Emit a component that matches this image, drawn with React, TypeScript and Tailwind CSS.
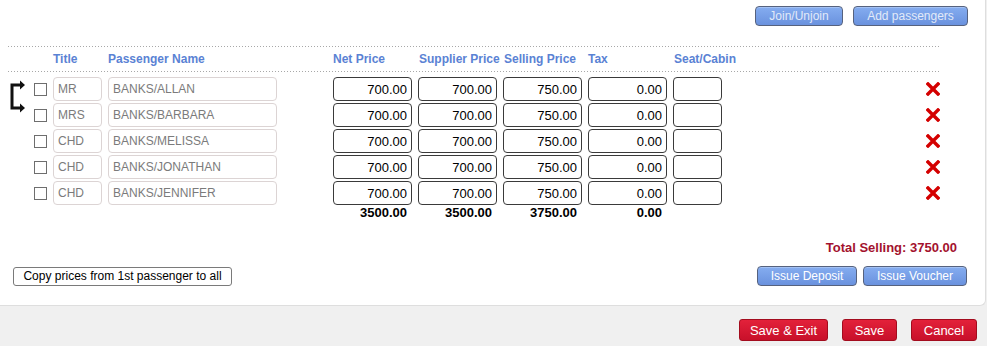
import React from "react";

type Passenger = { title: string; name: string; net: string; supplier: string; selling: string; tax: string };

const passengers: Passenger[] = [
  { title: "MR", name: "BANKS/ALLAN", net: "700.00", supplier: "700.00", selling: "750.00", tax: "0.00" },
  { title: "MRS", name: "BANKS/BARBARA", net: "700.00", supplier: "700.00", selling: "750.00", tax: "0.00" },
  { title: "CHD", name: "BANKS/MELISSA", net: "700.00", supplier: "700.00", selling: "750.00", tax: "0.00" },
  { title: "CHD", name: "BANKS/JONATHAN", net: "700.00", supplier: "700.00", selling: "750.00", tax: "0.00" },
  { title: "CHD", name: "BANKS/JENNIFER", net: "700.00", supplier: "700.00", selling: "750.00", tax: "0.00" },
];

const blueBtn =
  "h-[20px] rounded-[4px] border border-[#56627e] bg-[linear-gradient(#85adf0,#6a92de)] text-[12px] leading-none shadow-[inset_0_1px_0_rgba(255,255,255,0.25)]";
const redBtn =
  "h-[22px] rounded-[3px] border border-[#a30c1e] bg-[linear-gradient(#e3213a,#c8102a)] text-[13px] text-white leading-none";
const priceInput =
  "h-[24px] rounded-[4px] border border-[#3a3a3a] bg-white pr-[4px] text-right text-[13px] text-black outline-none";
const grayInput =
  "h-[24px] rounded-[4px] border border-[#dcd4d4] bg-white text-[12px] text-[#7b7b7b] outline-none";

function Dots() {
  return <div className="ml-[8px] h-px w-[932px] bg-[linear-gradient(to_right,#a8a8a8_1px,transparent_1px)] bg-[length:3px_1px]" />;
}

function RemoveIcon() {
  return (
    <svg width="14" height="14" viewBox="0 0 14 14" className="ml-[204px]">
      <path d="M2 2 L12 12 M12 2 L2 12" stroke="#d40000" strokeWidth="3.4" strokeLinecap="square" />
    </svg>
  );
}

function JoinArrow() {
  return (
    <svg width="18" height="36" viewBox="0 0 18 36" className="absolute left-[9px] top-[1px]">
      <path d="M3 7 V30 M3 7 H11 M3 30 H11" stroke="#111" strokeWidth="3" fill="none" strokeLinecap="square" />
      <path d="M11 2.5 L16 7 L11 11.5 Z" fill="#111" />
      <path d="M11 25.5 L16 30 L11 34.5 Z" fill="#111" />
    </svg>
  );
}

export default function App() {
  return (
    <div className="h-[346px] w-[987px] overflow-hidden bg-[#f0f0f0] font-['Liberation_Sans',Arial,sans-serif]">
      <div className="w-[986px] rounded-br-[6px] border-b border-r border-[#dedede] bg-white pb-[19px]">
        <div className="flex justify-end gap-[10px] pr-[17px] pt-[6px]">
          <button className={`${blueBtn} w-[88px] text-[#e2eaf8]`}>Join/Unjoin</button>
          <button className={`${blueBtn} w-[115px] text-[#e2eaf8]`}>Add passengers</button>
        </div>

        <div className="mt-[20px]">
          <Dots />
          <div className="flex h-[24px] items-center pl-[34px] text-[12px] font-bold text-[#5a82d4] whitespace-nowrap">
            <div className="w-[13px]" />
            <div className="ml-[6px] w-[49px]">Title</div>
            <div className="ml-[6px] w-[169px]">Passenger Name</div>
            <div className="ml-[56px] w-[79px]">Net Price</div>
            <div className="ml-[7px] w-[78px]">Supplier Price</div>
            <div className="ml-[7px] w-[78px]">Selling Price</div>
            <div className="ml-[6px] w-[79px]">Tax</div>
            <div className="ml-[7px] w-[49px]">Seat/Cabin</div>
          </div>
          <Dots />
        </div>

        <div className="relative mt-[5px] flex flex-col gap-[2px]">
          <JoinArrow />
          {passengers.map((p, i) => (
            <div key={i} className="flex h-[24px] items-center pl-[34px]">
              <span className="h-[13px] w-[13px] border border-[#6e6e6e] bg-white" />
              <input readOnly defaultValue={p.title} className={`${grayInput} ml-[6px] w-[49px] pl-[4px]`} />
              <input readOnly defaultValue={p.name} className={`${grayInput} ml-[6px] w-[169px] pl-[4px]`} />
              <input readOnly defaultValue={p.net} className={`${priceInput} ml-[56px] w-[79px]`} />
              <input readOnly defaultValue={p.supplier} className={`${priceInput} ml-[6px] w-[79px]`} />
              <input readOnly defaultValue={p.selling} className={`${priceInput} ml-[6px] w-[79px]`} />
              <input readOnly defaultValue={p.tax} className={`${priceInput} ml-[6px] w-[79px]`} />
              <input readOnly defaultValue="" className={`${priceInput} ml-[6px] w-[49px]`} />
              <RemoveIcon />
            </div>
          ))}
        </div>

        <div className="flex h-[16px] items-center pl-[333px] text-[13px] font-bold leading-[16px] text-black">
          <div className="w-[79px] pr-[5px] text-right">3500.00</div>
          <div className="ml-[6px] w-[79px] pr-[5px] text-right">3500.00</div>
          <div className="ml-[6px] w-[79px] pr-[5px] text-right">3750.00</div>
          <div className="ml-[6px] w-[79px] pr-[5px] text-right">0.00</div>
        </div>

        <div className="mt-[19px] flex h-[16px] items-center justify-end pr-[28px] text-[13px] font-bold text-[#a3122e]">
          Total Selling: 3750.00
        </div>

        <div className="mt-[10px] flex items-center pl-[13px] pr-[18px]">
          <button className="h-[19px] w-[219px] rounded-[3px] border border-[#7a7a7a] bg-white text-[12px] leading-none text-black">
            Copy prices from 1st passenger to all
          </button>
          <div className="ml-auto flex gap-[6px]">
            <button className={`${blueBtn} w-[100px] text-white`}>Issue Deposit</button>
            <button className={`${blueBtn} w-[104px] text-white`}>Issue Voucher</button>
          </div>
        </div>
      </div>

      <div className="flex justify-end gap-[14px] pr-[10px] pt-[13px]">
        <button className={`${redBtn} w-[89px]`}>Save &amp; Exit</button>
        <button className={`${redBtn} w-[55px]`}>Save</button>
        <button className={`${redBtn} w-[66px]`}>Cancel</button>
      </div>
    </div>
  );
}
